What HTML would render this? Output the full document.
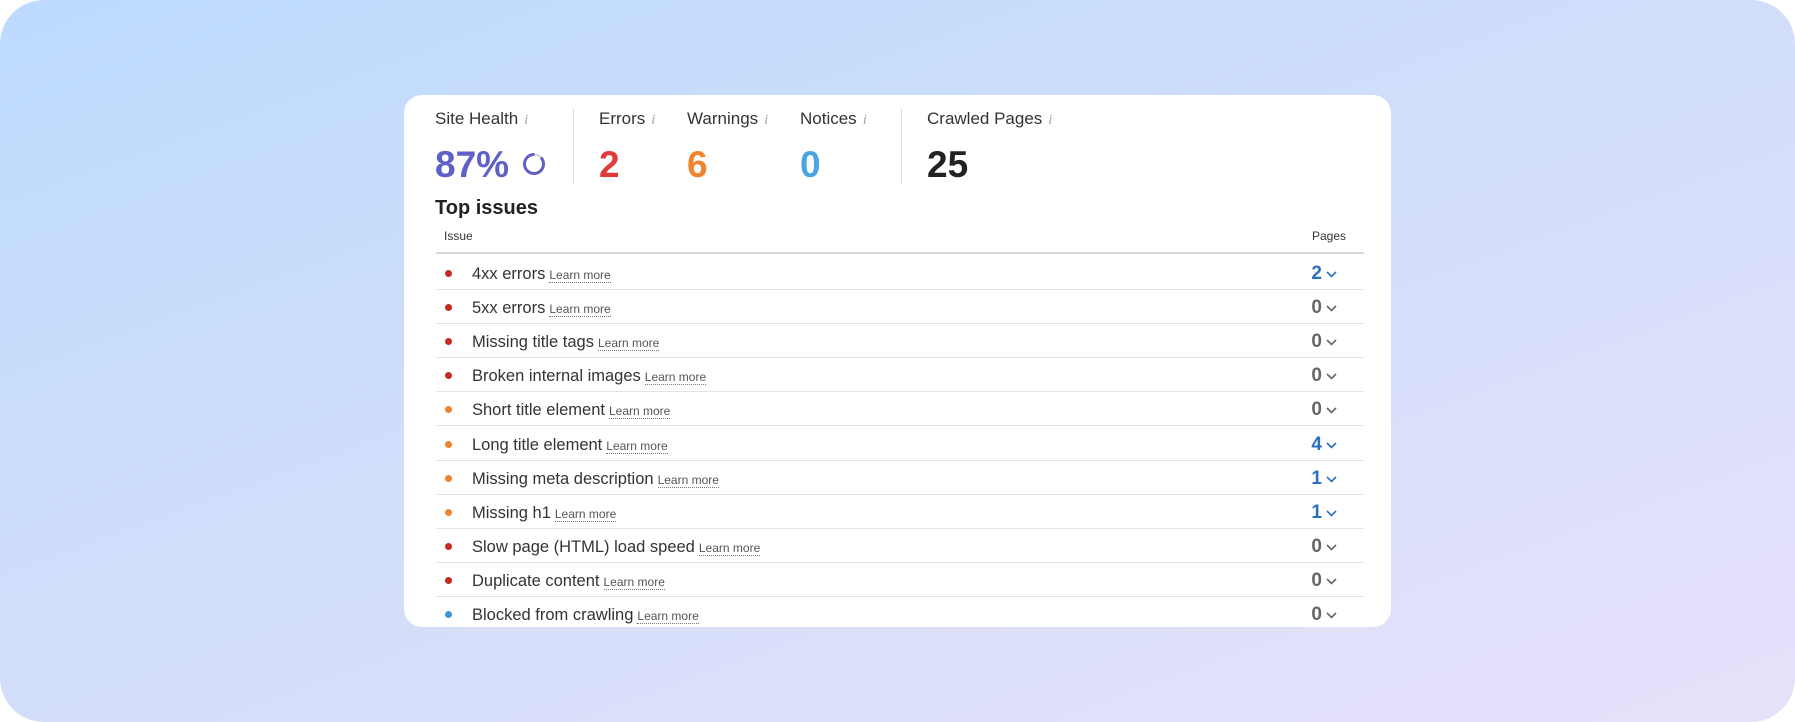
<!DOCTYPE html>
<html><head><meta charset="utf-8"><style>
html,body{margin:0;padding:0;width:1795px;height:722px;background:#fff;overflow:hidden;font-family:"Liberation Sans",sans-serif;}
.bg{position:absolute;left:0;top:0;width:1795px;height:722px;border-radius:44px;background:linear-gradient(160deg,#bddbff 0%,#d2def9 50%,#e7e1fb 100%);}
.card{position:absolute;left:404px;top:95px;width:987px;height:532px;background:#fff;border-radius:18px;overflow:hidden;}
.lbl{position:absolute;top:109px;font-size:17px;color:#333;}
.lbl i{color:#aaa;font-family:"Liberation Serif",serif;font-size:15px;margin-left:6px;}
.big{position:absolute;top:146px;font-size:37px;font-weight:bold;line-height:1;}
.div{position:absolute;width:1px;background:#ddd;top:109px;height:75px;}
.abs{position:absolute;}
.row{position:absolute;left:436px;width:928px;height:34px;border-bottom:1px solid #e3e3e3;}
.row .d{position:absolute;left:9px;top:15px;width:7px;height:7px;border-radius:50%;}
.row .t{position:absolute;left:36px;top:10px;font-size:16.5px;color:#333;white-space:nowrap;}
.row .t span{font-size:12px;color:#555;border-bottom:1px dotted #777;margin-left:4px;}
.row .n{position:absolute;right:42px;top:8px;font-size:19px;font-weight:bold;}
.row svg{position:absolute;right:27px;top:16px;}
</style></head><body>
<div class="bg"></div>
<div class="card"></div>
<div class="lbl" style="left:435px">Site Health<i>i</i></div>
<div class="lbl" style="left:599px">Errors<i>i</i></div>
<div class="lbl" style="left:687px">Warnings<i>i</i></div>
<div class="lbl" style="left:800px">Notices<i>i</i></div>
<div class="lbl" style="left:927px">Crawled Pages<i>i</i></div>
<div class="div" style="left:573px"></div>
<div class="div" style="left:901px"></div>
<div class="big" style="left:435px;color:#6060c8">87%</div>
<svg class="abs" style="left:522px;top:152px" width="24" height="24" viewBox="0 0 24 24"><circle cx="12" cy="12" r="9.5" fill="none" stroke="#ddd" stroke-width="3"/><circle cx="12" cy="12" r="9.5" fill="none" stroke="#6060c8" stroke-width="3" stroke-dasharray="52 60" transform="rotate(-43 12 12)"/></svg>
<div class="big" style="left:599px;color:#e03a3a">2</div>
<div class="big" style="left:687px;color:#f0842e">6</div>
<div class="big" style="left:800px;color:#4aa5e0">0</div>
<div class="big" style="left:927px;color:#222">25</div>
<div class="abs" style="left:435px;top:197px;font-size:20px;font-weight:bold;color:#222">Top issues</div>
<div class="abs" style="left:444px;top:229px;font-size:12px;color:#333">Issue</div>
<div class="abs" style="left:1312px;top:229px;font-size:12px;color:#333">Pages</div>
<div class="abs" style="left:436px;top:252px;width:928px;height:2px;background:#d4d8dc"></div>
<div id="rows"></div>
<script>
var R=[["#c62a1f","4xx errors","2",1],["#c62a1f","5xx errors","0",0],["#c62a1f","Missing title tags","0",0],["#c62a1f","Broken internal images","0",0],["#f0842e","Short title element","0",0],["#f0842e","Long title element","4",1],["#f0842e","Missing meta description","1",1],["#f0842e","Missing h1","1",1],["#c62a1f","Slow page (HTML) load speed","0",0],["#c62a1f","Duplicate content","0",0],["#3f95d8","Blocked from crawling","0",0]];
var h="";R.forEach(function(r,i){var c=r[3]?"#2b6fc0":"#666";h+='<div class="row" style="top:'+(255+i*34.1)+'px"><div class="d" style="background:'+r[0]+'"></div><div class="t">'+r[1]+'<span>Learn more</span></div><div class="n" style="color:'+c+'">'+r[2]+'</div><svg width="11" height="7" viewBox="0 0 11 7"><path d="M1 1l4.5 4.5L10 1" fill="none" stroke="'+c+'" stroke-width="1.6"/></svg></div>';});
document.getElementById("rows").innerHTML=h;
</script>
</body></html>
